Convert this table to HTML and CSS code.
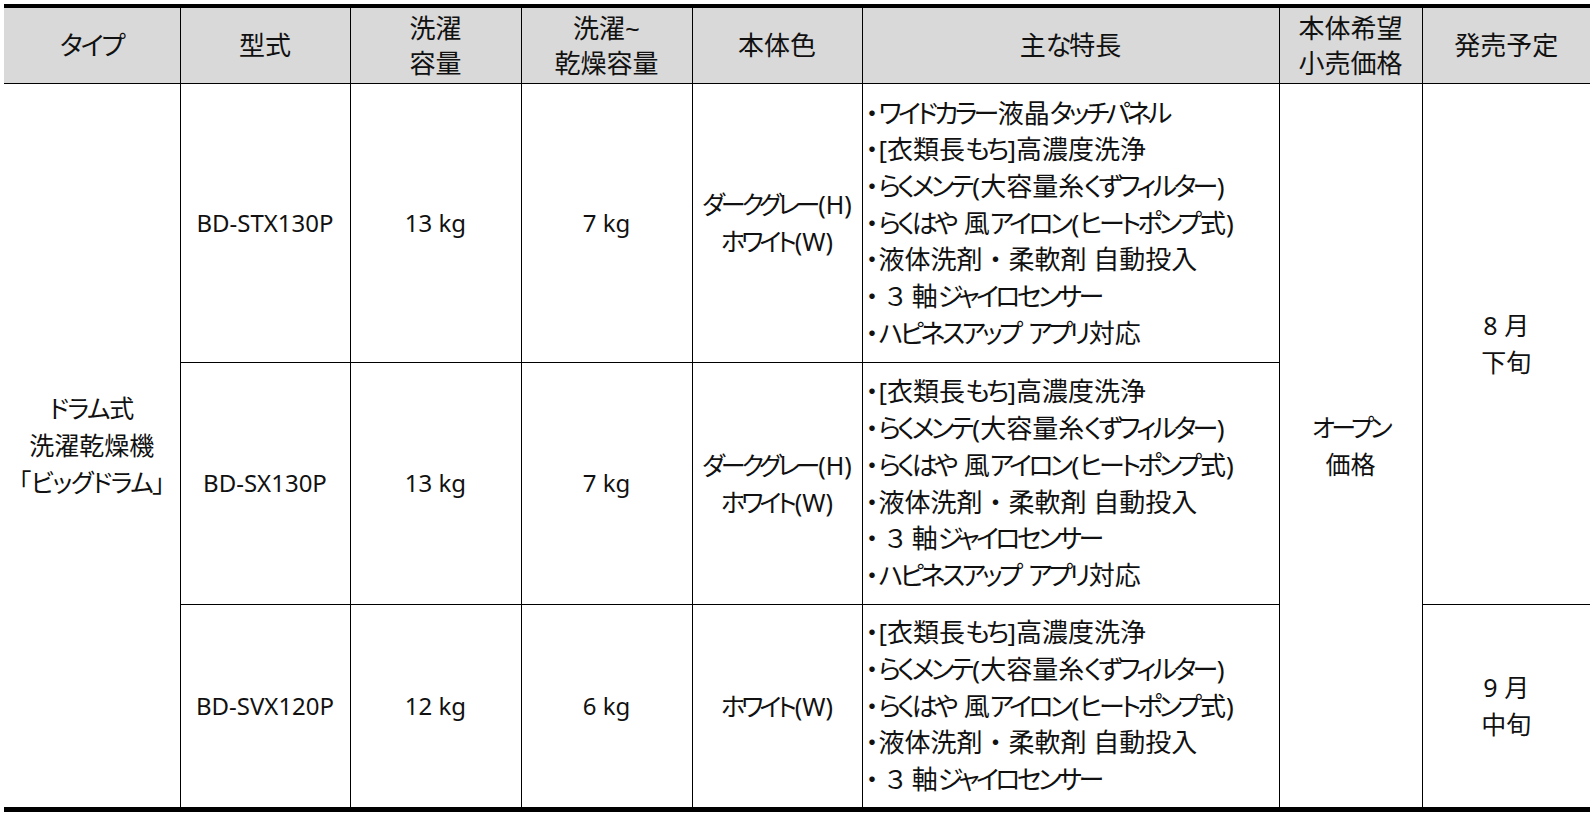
FILE: index.html
```html
<!DOCTYPE html>
<html lang="ja">
<head>
<meta charset="utf-8">
<title>製品仕様</title>
<link rel="stylesheet" href="styles.css">
</head>
<body>
<table class="spec">
  <colgroup>
    <col class="c-type"><col class="c-model"><col class="c-wash"><col class="c-dry"><col class="c-color"><col class="c-feat"><col class="c-price"><col class="c-date">
  </colgroup>
  <thead>
    <tr class="head">
      <th class="first"><span class="k">タイプ</span></th>
      <th>型式</th>
      <th>洗濯<br>容量</th>
      <th>洗濯~<br>乾燥容量</th>
      <th>本体色</th>
      <th>主<span class="k">な</span>特長</th>
      <th>本体希望<br>小売価格</th>
      <th>発売予定</th>
    </tr>
  </thead>
  <tbody>
    <tr class="r1">
      <td class="first bot" rowspan="3"><span class="k">ドラム</span>式<br>洗濯乾燥機<br>「<span class="k">ビッグドラム</span>」</td>
      <td class="lat">BD-STX130P</td>
      <td class="lat">13 kg</td>
      <td class="lat">7 kg</td>
      <td class="color"><span class="k">ダークグレー</span>(H)<br><span class="k">ホワイト</span>(W)</td>
      <td class="feat">・<span class="k">ワイドカラー</span>液晶<span class="k">タッチパネル</span><br>・[衣類長<span class="k">もち</span>]高濃度洗浄<br>・<span class="k">らくメンテ</span>(大容量糸<span class="k">くずフィルター</span>)<br>・<span class="k">らくはや</span> 風<span class="k">アイロン</span>(<span class="k">ヒートポンプ</span>式)<br>・液体洗剤<span class="mid">・</span>柔軟剤 自動投入<br>・ ３ 軸<span class="k">ジャイロセンサー</span><br>・<span class="k">ハピネスアップ</span> <span class="k">アプリ</span>対応</td>
      <td class="bot price" rowspan="3"><span class="k">オープン</span><br>価格</td>
      <td rowspan="2">8 月<br>下旬</td>
    </tr>
    <tr class="r2">
      <td class="lat">BD-SX130P</td>
      <td class="lat">13 kg</td>
      <td class="lat">7 kg</td>
      <td class="color"><span class="k">ダークグレー</span>(H)<br><span class="k">ホワイト</span>(W)</td>
      <td class="feat">・[衣類長<span class="k">もち</span>]高濃度洗浄<br>・<span class="k">らくメンテ</span>(大容量糸<span class="k">くずフィルター</span>)<br>・<span class="k">らくはや</span> 風<span class="k">アイロン</span>(<span class="k">ヒートポンプ</span>式)<br>・液体洗剤<span class="mid">・</span>柔軟剤 自動投入<br>・ ３ 軸<span class="k">ジャイロセンサー</span><br>・<span class="k">ハピネスアップ</span> <span class="k">アプリ</span>対応</td>
    </tr>
    <tr class="r3">
      <td class="lat">BD-SVX120P</td>
      <td class="lat">12 kg</td>
      <td class="lat">6 kg</td>
      <td class="color"><span class="k">ホワイト</span>(W)</td>
      <td class="feat">・[衣類長<span class="k">もち</span>]高濃度洗浄<br>・<span class="k">らくメンテ</span>(大容量糸<span class="k">くずフィルター</span>)<br>・<span class="k">らくはや</span> 風<span class="k">アイロン</span>(<span class="k">ヒートポンプ</span>式)<br>・液体洗剤<span class="mid">・</span>柔軟剤 自動投入<br>・ ３ 軸<span class="k">ジャイロセンサー</span></td>
      <td>9 月<br>中旬</td>
    </tr>
  </tbody>
</table>
</body>
</html>
```

FILE: styles.css
```css
html, body {
  background: #ffffff;
}
body {
  margin: 4px 0 0 4px;
  font-family: "Noto Sans", "Noto Sans CJK JP", sans-serif;
  font-feature-settings: "palt";
  color: #111111;
}
.spec {
  border-collapse: collapse;
  table-layout: fixed;
  width: 1586px;
  font-size: 25px;
  line-height: 36.7px;
}
.c-type { width: 176px; }
.c-model { width: 170px; }
.c-wash { width: 171px; }
.c-dry { width: 171px; }
.c-color { width: 170px; }
.c-feat { width: 417px; }
.c-price { width: 143px; }
.c-date { width: 168px; }

.spec th,
.spec td {
  border: 1px solid #000000;
  padding: 0;
  text-align: center;
  vertical-align: middle;
  font-weight: normal;
  white-space: nowrap;
}
.spec .first {
  border-left: none;
}
.spec th:last-child,
.spec td:last-child {
  border-right: none;
}
.head th {
  background: #d9d9d9;
  border-top: 4px solid #000000;
  height: 75px;
  font-size: 26px;
  line-height: 35px;
}
.r1 td { height: 278px; }
.r2 td { height: 241px; }
.r3 td { height: 202px; }
.r3 td,
.spec td.bot {
  border-bottom: 5px solid #000000;
}
.spec td.lat {
  font-size: 24px;
}
.k {
  letter-spacing: -1.3px;
}
.head .k {
  letter-spacing: -2px;
}
.color .k {
  letter-spacing: -4px;
  margin-right: 2px;
}
.price .k {
  letter-spacing: -3.5px;
}
.mid {
  font-feature-settings: normal;
}
.spec td.feat {
  text-align: left;
  padding-left: 3px;
  font-size: 26px;
}
.feat .k {
  letter-spacing: -3.6px;
  margin-right: 2px;
}
```
